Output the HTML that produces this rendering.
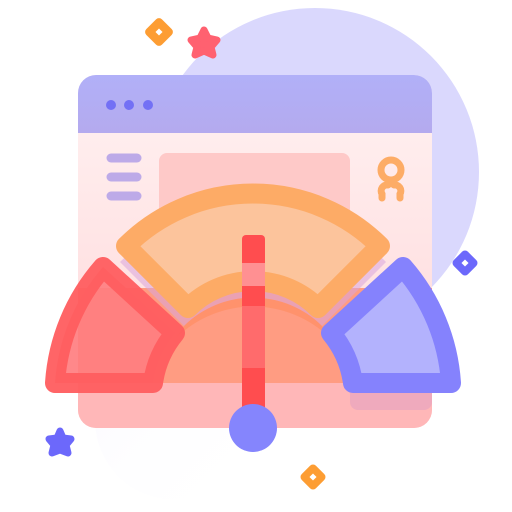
<!DOCTYPE html>
<html><head><style>html,body{margin:0;padding:0;background:#fff;width:512px;height:512px;overflow:hidden}</style></head>
<body>
<svg width="512" height="512" viewBox="0 0 512 512" xmlns="http://www.w3.org/2000/svg">
<defs>
<linearGradient id="hd" x1="0" y1="0" x2="0" y2="1"><stop offset="0" stop-color="#b1b0f8"/><stop offset="1" stop-color="#b4aaee"/></linearGradient>
<linearGradient id="bd" x1="0" y1="0" x2="0" y2="1"><stop offset="0" stop-color="#fff2f2"/><stop offset="1" stop-color="#ffd6d8"/></linearGradient>
<linearGradient id="wf" x1="0" y1="0" x2="1" y2="1"><stop offset="0" stop-color="#f7f6ff"/><stop offset="1" stop-color="#fff" stop-opacity="0"/></linearGradient>
</defs>
<circle cx="315" cy="172" r="164" fill="#dad8fd"/>
<circle cx="175" cy="420" r="80" fill="url(#wf)" opacity=".6"/>
<rect x="78" y="75" width="354" height="353" rx="18" fill="url(#bd)"/>
<path d="M96 75 H414 A18 18 0 0 1 432 93 V133 H78 V93 A18 18 0 0 1 96 75Z" fill="url(#hd)"/>
<circle cx="111" cy="105" r="5" fill="#7370f5"/><circle cx="129" cy="105" r="5" fill="#7370f5"/><circle cx="148" cy="105" r="5" fill="#7370f5"/>
<g stroke="#bdaae8" stroke-width="9" stroke-linecap="round"><line x1="111" y1="158" x2="137" y2="158"/><line x1="111" y1="177" x2="137" y2="177"/><line x1="111" y1="196" x2="137" y2="196"/></g>
<rect x="159" y="153" width="191" height="150" rx="8" fill="#fec9c8"/>
<g fill="none" stroke="#fdac66" stroke-width="7" stroke-linecap="round"><circle cx="391" cy="170" r="10"/><path d="M382 198 V194 A6 6 0 0 1 388 185 M400 198 V194 A6 6 0 0 0 394 185"/></g>
<rect x="78" y="288" width="354" height="95" fill="#ff9c82"/>
<path d="M78 383 H432 V410 A18 18 0 0 1 414 428 H96 A18 18 0 0 1 78 410Z" fill="#ffb7b8"/>
<rect x="350" y="300" width="82" height="110" rx="8" fill="#e4a2bf" opacity=".6"/>
<path d="M120 262 A188 188 0 0 1 386 262 L322 326 A98 98 0 0 0 184 326Z" fill="#d9a6dc" opacity=".55"/>
<path d="M184 326 A98 98 0 0 1 322 326 L330 338 A110 110 0 0 0 176 338Z" fill="#ff8f63" opacity=".7"/>
<path d="M126 246 A180 180 0 0 1 380 246 L318 308 A92 92 0 0 0 188 308Z" fill="#fcc49c" stroke="#fdab66" stroke-width="20" stroke-linejoin="round"/>
<path d="M55 383 A196 196 0 0 1 103 267 L175 333 A100 100 0 0 0 153 383Z" fill="#ff7e80" fill-opacity=".92" stroke="#ff5d5f" stroke-width="20" stroke-linejoin="round" stroke-opacity=".95"/>
<path d="M451 383 A196 196 0 0 0 403 267 L331 333 A100 100 0 0 1 353 383Z" fill="#b3b2fd" stroke="#8582fd" stroke-width="20" stroke-linejoin="round"/>
<rect x="242" y="235" width="23" height="190" rx="4" fill="#ff4d4f"/>
<rect x="242" y="263" width="23" height="23" fill="#ff9092"/>
<rect x="242" y="306" width="23" height="62" fill="#ff6b6c"/>
<circle cx="253" cy="428" r="24" fill="#8585fd"/>
<g transform="translate(159 32) rotate(45)"><rect x="-11" y="-11" width="22" height="22" rx="4" fill="#fd9d33"/><rect x="-2.5" y="-2.5" width="5" height="5" fill="#fff"/></g>
<g transform="translate(313 477) rotate(45)"><rect x="-10" y="-10" width="20" height="20" rx="4" fill="#fd9d33"/><rect x="-2.5" y="-2.5" width="5" height="5" fill="#fff"/></g>
<g transform="translate(465 263) rotate(45)"><rect x="-10" y="-10" width="20" height="20" rx="4" fill="#6c68fb"/><rect x="-2.5" y="-2.5" width="5" height="5" fill="#fff"/></g>
<path d="M204 30 L208 38 L217 40 L211 47 L213 55 L204 51 L195 55 L197 47 L191 40 L200 38Z" fill="#ff6170" stroke="#ff6170" stroke-width="7" stroke-linejoin="round"/>
<path d="M60 431 L63 438 L71 439 L66 445 L68 453 L60 450 L52 453 L54 445 L49 439 L57 438Z" fill="#6c68fb" stroke="#6c68fb" stroke-width="7" stroke-linejoin="round"/>
</svg>
</body></html>
